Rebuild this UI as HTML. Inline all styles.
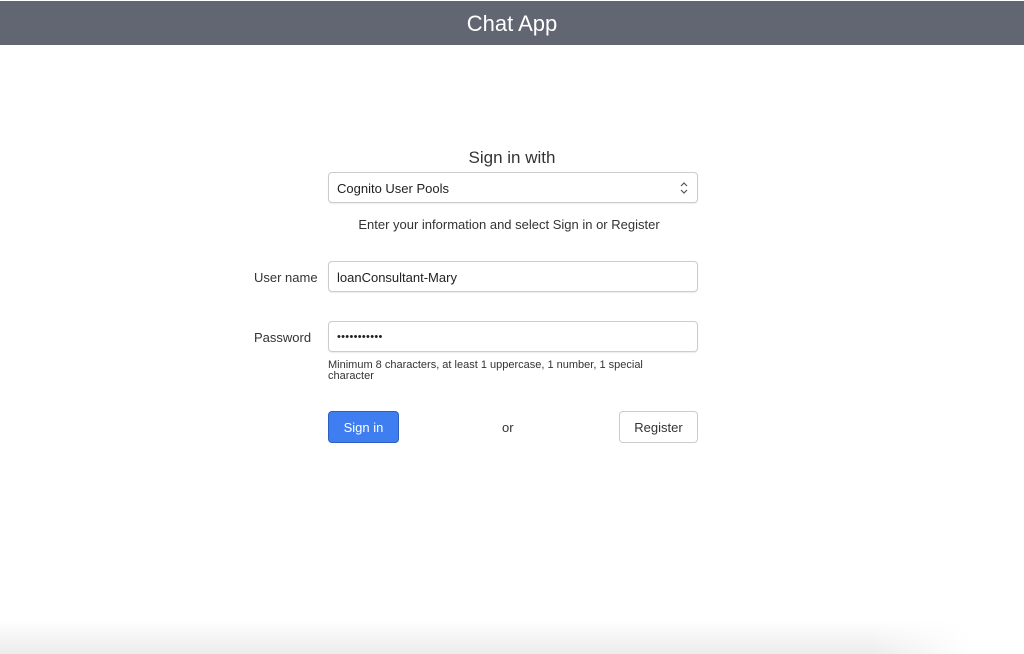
<!DOCTYPE html>
<html><head><style>
html,body{margin:0;padding:0;width:1024px;height:654px;overflow:hidden;background:#fff;font-family:"Liberation Sans",sans-serif;color:#333;position:relative}
.hdr{position:absolute;left:0;top:1px;width:1024px;height:44px;background:#626672;color:#fff;font-size:22px;text-align:center;line-height:46px}
.abs{position:absolute}
.box{position:absolute;left:328px;height:29px;border:1px solid #ccc;border-radius:4px;box-shadow:0 1px 1px rgba(0,0,0,.08);font-size:13px;line-height:31px;padding-left:8px;box-sizing:content-box;width:360px;color:#222}
.lbl{position:absolute;font-size:13px;color:#333}
.btn{position:absolute;top:411px;height:32px;border-radius:4px;font-size:13px;line-height:32px;text-align:center;box-sizing:border-box}
.bottom{position:absolute;left:0;top:620px;width:1024px;height:34px;background:linear-gradient(to bottom,#fff,#ececec);-webkit-mask-image:linear-gradient(to right,#000 85%,transparent 95%)}
</style></head><body>
<div class="hdr">Chat App</div>
<div class="abs" style="left:0;width:1024px;top:148px;text-align:center;font-size:17px;color:#333">Sign in with</div>
<div class="box" style="top:172px">Cognito User Pools
<svg style="position:absolute;right:8px;top:8px" width="10" height="14" viewBox="0 0 10 14"><path d="M2 5L5 2L8 5M2 9L5 12L8 9" fill="none" stroke="#555" stroke-width="1.2"/></svg></div>
<div class="abs" style="left:324px;width:370px;top:217px;text-align:center;font-size:13px;color:#333">Enter your information and select Sign in or Register</div>
<div class="lbl" style="left:254px;top:270px">User name</div>
<div class="box" style="top:261px">loanConsultant-Mary</div>
<div class="lbl" style="left:254px;top:330px">Password</div>
<div class="box" style="top:321px;font-size:11px;letter-spacing:0.3px">•••••••••••</div>
<div class="abs" style="left:328px;top:360px;width:360px;font-size:11px;line-height:11px;color:#333">Minimum 8 characters, at least 1 uppercase, 1 number, 1 special character</div>
<div class="btn" style="left:328px;width:71px;background:#3f7ef0;color:#fff;border:1px solid #2d5fc0;line-height:31px">Sign in</div>
<div class="abs" style="left:502px;top:420px;font-size:13px">or</div>
<div class="btn" style="left:619px;width:79px;border:1px solid #ccc;color:#333;line-height:31px">Register</div>
<div class="bottom"></div>
</body></html>
